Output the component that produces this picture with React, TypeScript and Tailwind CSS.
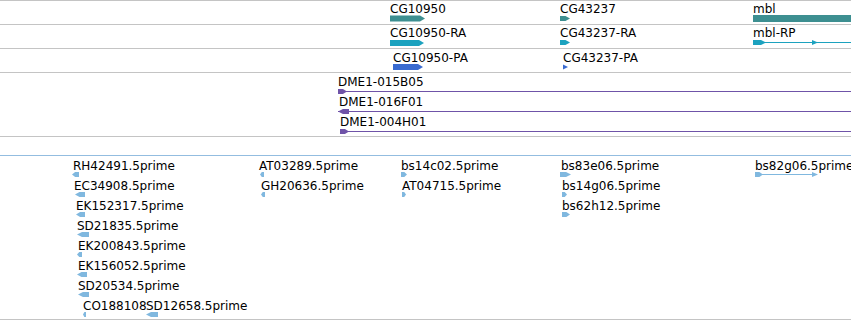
import React from "react";

type Glyph =
  | { k: "bar"; x0: number; x1: number; y0: number; y1: number; dir: "R" | "L" | "N" }
  | { k: "line"; x0: number; x1: number; y: number }
  | { k: "tri"; x0: number; x1: number; y0: number; y1: number; dir: "R" | "L" };

type Label = { x: number; y: number; t: string };

function arrowPts(g: { x0: number; x1: number; y0: number; y1: number; dir: "R" | "L" | "N" }) {
  const { x0, x1, y0, y1, dir } = g;
  const m = (y0 + y1) / 2;
  const w = x1 - x0;
  const tip = Math.min(5, w * 0.45);
  if (dir === "R") return `${x0},${y0} ${x1 - tip},${y0} ${x1},${m} ${x1 - tip},${y1} ${x0},${y1}`;
  if (dir === "L") return `${x1},${y0} ${x0 + tip},${y0} ${x0},${m} ${x0 + tip},${y1} ${x1},${y1}`;
  return `${x0},${y0} ${x1},${y0} ${x1},${y1} ${x0},${y1}`;
}

function Track({
  top,
  color,
  glyphs,
  labels,
  className,
}: {
  top: number;
  color: string;
  glyphs: Glyph[];
  labels: Label[];
  className: string;
}) {
  const oy = top + 1;
  return (
    <div className={`relative w-full ${className}`}>
      <svg className="absolute left-0 top-0 overflow-visible" width={851} height={10} style={{ overflow: "visible" }}>
        {glyphs.map((g, i) => {
          if (g.k === "line")
            return <line key={i} x1={g.x0} x2={g.x1} y1={g.y - oy} y2={g.y - oy} stroke={color} strokeWidth={1} />;
          if (g.k === "tri") {
            const y0 = g.y0 - oy;
            const y1 = g.y1 - oy;
            const m = (y0 + y1) / 2;
            const pts = g.dir === "R" ? `${g.x0},${y0} ${g.x1},${m} ${g.x0},${y1}` : `${g.x1},${y0} ${g.x0},${m} ${g.x1},${y1}`;
            return <polygon key={i} points={pts} fill={color} />;
          }
          return <polygon key={i} points={arrowPts({ ...g, y0: g.y0 - oy, y1: g.y1 - oy })} fill={color} />;
        })}
      </svg>
      {labels.map((l, i) => (
        <span
          key={i}
          className="absolute whitespace-nowrap leading-[14px] text-[12px] text-black"
          style={{ left: l.x, top: l.y - oy }}
        >
          {l.t}
        </span>
      ))}
    </div>
  );
}

const bottomRows: { x: number; row: number; t: string; m0: number; m1: number; dir: "L" | "R" }[] = [
  { x: 73, row: 0, t: "RH42491.5prime", m0: 72, m1: 79, dir: "L" },
  { x: 74, row: 1, t: "EC34908.5prime", m0: 75, m1: 85, dir: "L" },
  { x: 76, row: 2, t: "EK152317.5prime", m0: 76, m1: 85, dir: "L" },
  { x: 77, row: 3, t: "SD21835.5prime", m0: 77, m1: 89, dir: "L" },
  { x: 78, row: 4, t: "EK200843.5prime", m0: 77, m1: 82, dir: "L" },
  { x: 78, row: 5, t: "EK156052.5prime", m0: 77, m1: 87, dir: "L" },
  { x: 78, row: 6, t: "SD20534.5prime", m0: 78, m1: 89, dir: "L" },
  { x: 83, row: 7, t: "CO188108", m0: 83, m1: 86, dir: "L" },
  { x: 146, row: 7, t: "SD12658.5prime", m0: 146, m1: 158, dir: "L" },
  { x: 259, row: 0, t: "AT03289.5prime", m0: 260, m1: 264, dir: "L" },
  { x: 261, row: 1, t: "GH20636.5prime", m0: 261, m1: 265, dir: "L" },
  { x: 401, row: 0, t: "bs14c02.5prime", m0: 401, m1: 407, dir: "R" },
  { x: 402, row: 1, t: "AT04715.5prime", m0: 402, m1: 406, dir: "R" },
  { x: 561, row: 0, t: "bs83e06.5prime", m0: 560, m1: 571, dir: "R" },
  { x: 562, row: 1, t: "bs14g06.5prime", m0: 562, m1: 567, dir: "R" },
  { x: 562, row: 2, t: "bs62h12.5prime", m0: 562, m1: 570, dir: "R" },
  { x: 755, row: 0, t: "bs82g06.5prime", m0: 755, m1: 763, dir: "R" },
];

export default function App() {
  const bottomGlyphs: Glyph[] = [
    ...bottomRows.map(
      (r): Glyph => ({ k: "bar", x0: r.m0, x1: r.m1, y0: 172 + r.row * 20, y1: 177 + r.row * 20, dir: r.dir })
    ),
    { k: "line", x0: 755, x1: 817, y: 174.5 },
    { k: "tri", x0: 812, x1: 818, y0: 172, y1: 177, dir: "R" },
  ];
  const bottomLabels: Label[] = bottomRows.map((r) => ({ x: r.x, y: 159 + r.row * 20, t: r.t }));

  return (
    <div className="relative flex h-[320px] w-[851px] flex-col overflow-hidden bg-white font-['DejaVu_Sans',sans-serif]">
      <Track
        top={0}
        color="#3d8f91"
        className="h-[24px] border-t border-[#c4c4c4]"
        glyphs={[
          { k: "bar", x0: 390, x1: 425, y0: 15.5, y1: 21.5, dir: "R" },
          { k: "bar", x0: 560, x1: 570, y0: 16, y1: 21, dir: "R" },
          { k: "bar", x0: 753, x1: 852, y0: 15, y1: 22, dir: "N" },
        ]}
        labels={[
          { x: 390, y: 2, t: "CG10950" },
          { x: 560, y: 2, t: "CG43237" },
          { x: 753, y: 2, t: "mbl" },
        ]}
      />
      <Track
        top={24}
        color="#1ca2bf"
        className="h-[24px] border-t border-[#c4c4c4]"
        glyphs={[
          { k: "bar", x0: 390, x1: 424, y0: 40, y1: 46, dir: "R" },
          { k: "bar", x0: 560, x1: 570, y0: 40, y1: 45, dir: "R" },
          { k: "line", x0: 753, x1: 852, y: 42.5 },
          { k: "bar", x0: 753, x1: 766, y0: 40, y1: 45, dir: "R" },
          { k: "tri", x0: 812, x1: 818, y0: 40, y1: 45, dir: "R" },
        ]}
        labels={[
          { x: 390, y: 26, t: "CG10950-RA" },
          { x: 560, y: 26, t: "CG43237-RA" },
          { x: 753, y: 26, t: "mbl-RP" },
        ]}
      />
      <Track
        top={48}
        color="#3a6bd0"
        className="h-[24px] border-t border-[#c4c4c4]"
        glyphs={[
          { k: "bar", x0: 393, x1: 423, y0: 64, y1: 70, dir: "R" },
          { k: "tri", x0: 563, x1: 568, y0: 64.5, y1: 69.5, dir: "R" },
        ]}
        labels={[
          { x: 393, y: 51, t: "CG10950-PA" },
          { x: 563, y: 51, t: "CG43237-PA" },
        ]}
      />
      <Track
        top={72}
        color="#6f53a8"
        className="h-[64px] border-t border-[#c4c4c4]"
        glyphs={[
          { k: "line", x0: 338, x1: 852, y: 91.5 },
          { k: "bar", x0: 338, x1: 347, y0: 89, y1: 94, dir: "R" },
          { k: "line", x0: 338, x1: 852, y: 111.5 },
          { k: "bar", x0: 338, x1: 349, y0: 109, y1: 114, dir: "L" },
          { k: "line", x0: 340, x1: 852, y: 131.5 },
          { k: "bar", x0: 340, x1: 349, y0: 129, y1: 134, dir: "R" },
        ]}
        labels={[
          { x: 338, y: 75, t: "DME1-015B05" },
          { x: 339, y: 95, t: "DME1-016F01" },
          { x: 340, y: 115, t: "DME1-004H01" },
        ]}
      />
      <div className="h-[19px] w-full border-t border-[#c4c4c4]" />
      <Track
        top={155}
        color="#80b8df"
        className="h-[165px] border-t border-b border-t-[#93bde0] border-b-[#c4c4c4]"
        glyphs={bottomGlyphs}
        labels={bottomLabels}
      />
    </div>
  );
}
